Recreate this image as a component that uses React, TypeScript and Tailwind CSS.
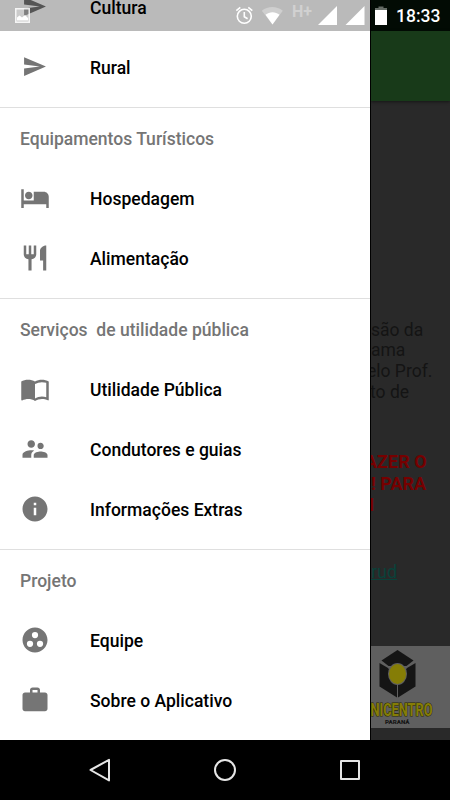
import React from 'react';
import { IconType } from 'react-icons';
import {
  MdGroupWork,
  MdHotel,
  MdImportContacts,
  MdInfo,
  MdRestaurant,
  MdSend,
  MdSupervisorAccount,
  MdWork,
} from 'react-icons/md';

interface MenuItem {
  label: string;
  icon: IconType;
  small?: boolean;
}

interface MenuSection {
  title?: string;
  items: MenuItem[];
}

const sections: MenuSection[] = [
  {
    items: [
      { label: 'Cultura', icon: MdSend, small: true },
      { label: 'Rural', icon: MdSend, small: true },
    ],
  },
  {
    title: 'Equipamentos Turísticos',
    items: [
      { label: 'Hospedagem', icon: MdHotel },
      { label: 'Alimentação', icon: MdRestaurant },
    ],
  },
  {
    title: 'Serviços  de utilidade pública',
    items: [
      { label: 'Utilidade Pública', icon: MdImportContacts },
      { label: 'Condutores e guias', icon: MdSupervisorAccount },
      { label: 'Informações Extras', icon: MdInfo },
    ],
  },
  {
    title: 'Projeto',
    items: [
      { label: 'Equipe', icon: MdGroupWork },
      { label: 'Sobre o Aplicativo', icon: MdWork },
    ],
  },
];

const StatusBar: React.FC = () => (
  <div className="absolute inset-x-0 top-0 flex h-[31px]">
    <div className="flex w-[370px] bg-black/27 pl-[15px]">
      <svg width="15" height="15" viewBox="0 0 15 15" className="mt-2">
        <rect x="0.75" y="0.75" width="13.5" height="13.5" fill="#fff" fillOpacity="0.25" stroke="#fff" strokeOpacity="0.85" strokeWidth="1.5" />
        <path d="M2 12.5V9.5l2.5-2 2.5 2L10 7l3 3v2.5z" fill="#fff" />
      </svg>
    </div>
    <svg width="170" height="31" viewBox="0 0 170 31" className="absolute top-0 left-[230px]">
      {/* alarm */}
      <g fill="none" stroke="#fff" strokeWidth="1.6">
        <circle cx="14.3" cy="16.3" r="7" />
        <path d="M14.3 12v4.8l3.3 2M6.3 10.6l4-3.3M22.3 10.6l-4-3.3" />
      </g>
      {/* wifi */}
      <path d="M31.8 10.7c6-5 15-5 21 0L42.5 24.5z" fill="#fff" fillOpacity="0.3" />
      <path d="M35.5 14.8c4-3.4 10-3.4 14 0l-7 9.7z" fill="#fff" />
      <path d="M88 25H107V6z M115.5 25H134.5V6z" fill="#fff" />
      {/* battery */}
      <path d="M145 10V8h3.5V6.5h5V8h3.5v2z" fill="#646b65" />
      <path d="M145 10h12v15h-12z" fill="#fff" />
    </svg>
    <span className="absolute top-1 left-[292px] text-[16px] leading-4 font-bold text-white/35">H+</span>
    <span className="absolute top-[6px] left-[396px] text-[17.5px] leading-[21px] font-medium text-white">18:33</span>
  </div>
);

const Drawer: React.FC = () => (
  <nav className="h-[740px] w-[370px] shrink-0 overflow-hidden bg-white">
    <div className="-mt-[22.4px]">
      {sections.map((section, index) => (
        <section key={index} className={index ? 'border-t-[1.5px] border-[#dfdfdf]' : 'pb-[9px]'}>
          {section.title && (
            <h2 className="h-[61px] pl-5 text-[17.55px] leading-[63px] font-medium whitespace-pre text-[#757575]">
              {section.title}
            </h2>
          )}
          <ul className={section.title ? 'pb-[9.2px]' : ''}>
            {section.items.map(({ label, icon: Icon, small }) => (
              <li key={label} className="flex h-[60px] items-center pl-5">
                <span className={`flex size-[30px] items-center justify-center text-[#757575] ${small ? 'mb-[2px] pr-[2px]' : 'mb-[2px]'}`}>
                  <Icon size={small ? 25 : 30} />
                </span>
                <span className="ml-10 pt-px text-[17.55px] font-medium text-black">{label}</span>
              </li>
            ))}
          </ul>
        </section>
      ))}
    </div>
  </nav>
);

const Logo: React.FC = () => (
  <svg width="79" height="82" viewBox="371 646 79 82" className="shrink-0">
    <rect x="371" y="646" width="79" height="82" fill="#5f5f5f" />
    <g fill="#151515">
      <path d="M397.5 650 381.5 660.5l7 5.5h18l7-5.5z" />
      <path d="M379.5 663l8.5 5 9 12v17.5l-17.5-11z" />
      <path d="M415.5 663l-8.5 5-9 12v17.5l17.5-11z" />
    </g>
    <ellipse cx="397.5" cy="674" rx="9.5" ry="11" fill="#5f5f5f" />
    <ellipse cx="397.5" cy="674" rx="8.5" ry="10" fill="#857d06" />
    <text x="370.5" y="715.5" fontSize="17.5" fontWeight="700" textLength="62" lengthAdjust="spacingAndGlyphs" fill="#857d06" stroke="#2b2900" strokeWidth="1.2" paintOrder="stroke">NICENTRO</text>
    <text x="385" y="724" fontSize="5.5" fontWeight="900" textLength="24.5" lengthAdjust="spacingAndGlyphs" fill="#151515">PARANÁ</text>
  </svg>
);

// Page behind the open drawer, already darkened by the scrim
const Page: React.FC = () => (
  <main className="flex h-[740px] flex-1 flex-col overflow-hidden border-l border-black bg-[#292929] whitespace-nowrap">
    <div className="h-[31px] shrink-0 bg-[#020b04]" />
    <div className="h-[70px] shrink-0 bg-[#183a19] shadow-[0_1px_3px_rgba(0,0,0,0.5)]" />
    <p className="mt-[218.5px] text-[17.5px] leading-[20.7px] text-[#141414]">
      são da
      <br />
      ama
      <br />
      <span className="-ml-[4px]">elo Prof.</span>
      <br />
      <span className="-ml-px">to de</span>
    </p>
    <p className="mt-[49px] text-[18px] leading-[21.3px] font-bold text-[#760000]">
      <span className="-ml-[6px]">AZER O</span>
      <br />
      ! PARA
      <br />
      <span className="-ml-[2px]">I</span>
    </p>
    <a className="mt-[45.5px] text-[18px] leading-[22px] text-[#0a413a] underline">rud</a>
    <div className="mt-auto mb-3 flex">
      <Logo />
    </div>
  </main>
);

const NavigationBar: React.FC = () => (
  <footer className="flex h-[60px] items-center justify-around bg-black px-[38px]">
    <svg width="24" height="24" viewBox="0 0 24 24" fill="none" stroke="#e6e6e6" strokeWidth="2" strokeLinejoin="round">
      <path d="M2.5 12 21 1.8v20.6z" />
    </svg>
    <svg width="24" height="24" viewBox="0 0 24 24" fill="none" stroke="#e6e6e6" strokeWidth="2">
      <circle cx="12" cy="12" r="10" />
    </svg>
    <svg width="24" height="24" viewBox="0 0 24 24" fill="none" stroke="#e6e6e6" strokeWidth="2" strokeLinejoin="round">
      <rect x="3" y="3" width="18" height="18" />
    </svg>
  </footer>
);

const App: React.FC = () => {
  return (
    <div className="relative h-[800px] w-[450px] overflow-hidden bg-black font-['Roboto',sans-serif]">
      <div className="flex">
        <Drawer />
        <Page />
      </div>
      <NavigationBar />
      <StatusBar />
    </div>
  );
};

export default App;
